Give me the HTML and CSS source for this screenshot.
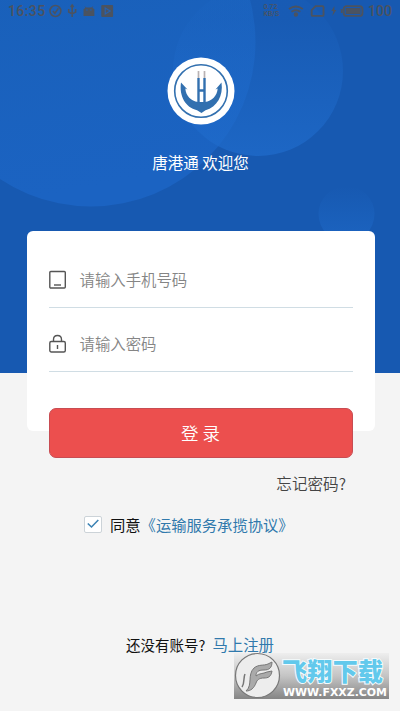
FILE: index.html
```html
<!DOCTYPE html>
<html lang="zh-CN">
<head>
<meta charset="utf-8">
<title>唐港通</title>
<link rel="stylesheet" href="styles.css">
</head>
<body>
<main class="screen">
  <svg class="backdrop" width="400" height="373" viewBox="0 0 400 373" aria-hidden="true">
    <defs>
      <linearGradient id="g1" x1="0" y1="0" x2="0.2" y2="1"><stop offset="0.3" stop-color="#1960b9"/><stop offset="1" stop-color="#1b63c2"/></linearGradient>
      <linearGradient id="g2" x1="0" y1="0" x2="0" y2="1"><stop offset="0.2" stop-color="#1f6bcb" stop-opacity="0.12"/><stop offset="1" stop-color="#1f6bcb" stop-opacity="0.75"/></linearGradient>
      <linearGradient id="g3" x1="0" y1="0" x2="0" y2="1"><stop offset="0" stop-color="#1f6bcb" stop-opacity="0"/><stop offset="1" stop-color="#1f6bcb" stop-opacity="0.6"/></linearGradient>
    </defs>
    <circle cx="91" cy="42" r="164.500" fill="url(#g1)"/>
    <circle cx="258" cy="71" r="85" fill="url(#g2)"/>
    <circle cx="346.500" cy="214" r="28" fill="url(#g3)"/>
  </svg>
  <header class="status">
    <span class="clock">16:35</span>
    <svg class="status-left" width="70" height="16" viewBox="0 0 70 16" fill="none" stroke="#4b5360" stroke-width="1.600">
      <circle cx="7.500" cy="8" r="5.500"/><path d="M5 8l2 2.300 3.500-5"/>
      <path d="M24.500 2v12M21 6v3l3.500 2 3.500-2V6M23 4L24.500 2l1.500 2"/>
      <path d="M36 13V6l2-1-1-2 2 1.500h5L46 3l-1 2 2 1v7z" fill="#4b5360" stroke="none"/>
      <path d="M39 7h1M43 7h1" stroke="#1961bb"/>
      <rect x="54" y="2" width="12" height="12" rx="1" fill="#4b5360" stroke="none"/>
      <path d="M58 5l5 3-5 3z" stroke="#2861ae" stroke-width="1.200"/>
    </svg>
    <span class="speed">0.72<br>KB/S</span>
    <svg class="status-right" width="82" height="16" viewBox="0 0 82 16" fill="none" stroke="#4b5360" stroke-width="1.900">
      <path d="M1 6q7-5 14 0M3.500 8.800q4.500-3.200 9 0"/><circle cx="8" cy="11.500" r="1.300" fill="#4b5360"/>
      <path d="M28 3h7q1 0 1 1v8q0 1-1 1H25q-1 0-1-1V7z"/>
      <path d="M47 3l-3 5h2l-1 5 4-6h-2z" fill="#4b5360" stroke="none"/>
      <rect x="56.500" y="3" width="19" height="10" rx="3"/><rect x="58.500" y="5" width="15" height="6" fill="#4b5360" stroke="none"/><path d="M54.500 6v4"/>
    </svg>
    <span class="level">100</span>
  </header>
  <section class="brand">
    <svg class="logo" width="68" height="68" viewBox="0 0 68 68">
      <circle cx="34" cy="34" r="33.500" fill="#fff"/>
      <circle cx="34" cy="34" r="26.300" fill="none" stroke="#3270af" stroke-width="1.600"/>
      <path d="M14 25.500L20.500 32.500l-2.200-1C19 39 24 44 31 45h7C45 44 50 39 50.700 31.500l-2.200 1L54.500 25.500C56.500 39 50 50 38.500 53.200L34.500 56 30 53.200C18.500 50.500 12 39 14 25.500z" fill="#3270af"/>
      <path d="M31.500 21v26M37.500 21v26M32 33.500h6" fill="none" stroke="#3270af" stroke-width="2.400"/>
      <path d="M31.500 14v7M37.500 14v7" stroke="#b9b2b3" stroke-width="1.700"/>
    </svg>
    <h1 class="welcome">唐港通 欢迎您</h1>
  </section>
  <form class="card">
    <label class="field">
      <svg width="18" height="20" viewBox="0 0 18 20" fill="none" stroke="#555" stroke-width="1.400"><rect x="0.800" y="2.500" width="15.500" height="16.500" rx="1"/><path d="M5 16h7"/></svg>
      <span>请输入手机号码</span>
    </label>
    <label class="field">
      <svg width="18" height="20" viewBox="0 0 18 20" fill="none" stroke="#555" stroke-width="1.400"><rect x="0.800" y="8.500" width="15.500" height="10.500" rx="1.500"/><path d="M4.500 8.500V6.500q0-4 4-4t4 4v2M8.500 12v4"/></svg>
      <span>请输入密码</span>
    </label>
  </form>
  <button class="login" type="button">登 录</button>
  <a class="forgot">忘记密码?</a>
  <div class="agree">
    <span class="check"><svg width="12" height="10" viewBox="0 0 12 10" fill="none" stroke="#3c83b4" stroke-width="1.600"><path d="M.8 4.500l3.700 3.500L11.300 1"/></svg></span>
    <span>同意<a class="link">《运输服务承揽协议》</a></span>
  </div>
  <div class="signup"><span>还没有账号?</span><a class="link">马上注册</a></div>
  <svg class="watermark" width="155" height="46" viewBox="0 0 155 46">
    <defs><linearGradient id="w" x1="0" y1="0" x2="0" y2="1"><stop offset="0" stop-color="#eee"/><stop offset="0.500" stop-color="#c4c4c4"/><stop offset="1" stop-color="#858585"/></linearGradient></defs>
    <rect width="155" height="46" fill="url(#w)"/>
    <circle cx="23.500" cy="22.500" r="22" fill="#ededed" stroke="#777" stroke-width="1.200"/>
    <path d="M12 38C19 32 13 22 20 15c5-4 9-2 14-4l4-2c0 6-3 8-8 8-6 0-8 2-8 6 3-3 7-2 11-4l5-1c-1 6-4 7-8 7-5 0-7 2-8 5-2 5-5 8-10 8z" fill="#aaa" stroke="#777" stroke-width="1"/>
    <path d="M8 34c3-4 1-9 3-13" fill="none" stroke="#777" stroke-width="1.500"/>
    <text class="mark-name" x="48" y="27.500" textLength="101">飞翔下载</text>
    <text class="mark-url" x="49" y="42.500" textLength="104" lengthAdjust="spacingAndGlyphs">WWW.FXXZ.COM</text>
  </svg>
</main>
</body>
</html>
```

FILE: styles.css
```css
* { box-sizing: border-box; }
body {
  margin: 0;
  background: #f4f4f4;
  font-family: "Noto Sans CJK SC", sans-serif;
  font-size: 15.4px;
  color: #111;
}
.screen {
  position: relative;
  width: 400px;
  height: 711px;
  overflow: hidden;
  display: flex;
  flex-direction: column;
  background: linear-gradient(#1759b1 373px, #f4f4f4 373px);
}
.screen > * { position: relative; flex-shrink: 0; }
.screen > .backdrop { position: absolute; top: 0; left: 0; }
.status {
  display: flex;
  align-items: center;
  height: 22px;
  padding: 0 8px;
  font-family: Roboto, sans-serif;
  font-size: 14px;
  font-weight: 500;
  color: #4b5360;
}
.clock { width: 41px; letter-spacing: .4px; }
.speed {
  width: 18px;
  margin-left: 146px;
  font-size: 7px;
  line-height: 7px;
}
.status-right { margin-left: 7px; }
.level { margin-left: -1px; }
.brand {
  display: flex;
  flex-direction: column;
  align-items: center;
  padding-top: 35px;
  height: 209px;
}
.logo { margin-left: 1px; }
.welcome {
  margin: 25px 0 0 1px;
  font-size: 15.5px;
  font-weight: 400;
  line-height: 24px;
  color: #fff;
}
.card {
  width: 348px;
  height: 200px;
  margin-left: 26.500px;
  padding: 12px 22px;
  border-radius: 6px;
  background: #fff;
}
.field {
  display: flex;
  align-items: center;
  gap: 13px;
  height: 64.500px;
  padding: 8px 0 0;
  border-bottom: 1px solid #d0dde4;
  color: #858585;
  font-weight: 350;
}
.login {
  width: 304px;
  height: 50px;
  margin: -23px 0 0 48.500px;
  padding: 0 0 2px;
  border: 1px solid #c84c52;
  border-radius: 7px;
  background: #ec4f4e;
  color: #fff;
  font: 350 17.500px "Noto Sans CJK SC", sans-serif;
}
.forgot {
  align-self: flex-end;
  margin: 13px 54px 0 0;
  line-height: 24px;
  font-size: 15.600px;
  font-weight: 350;
  color: #444;
}
.agree {
  display: flex;
  align-items: center;
  gap: 8px;
  height: 24px;
  margin: 17px 0 0 84px;
  font-size: 15.300px;
}
.check {
  display: grid;
  place-items: center;
  width: 18px;
  height: 17px;
  border: 1px solid #ccd3d8;
  border-radius: 2px;
  background: #fff;
}
.link { color: #3079ac; }
.signup {
  display: flex;
  align-items: center;
  gap: 7px;
  height: 24px;
  margin: 96px 0 0 126px;
}
.signup span { font-size: 14.500px; }
.screen > .watermark { position: absolute; left: 234px; top: 653px; overflow: visible; }
.mark-name {
  font: 900 25px "Noto Sans CJK SC", sans-serif;
  fill: #62c9ec;
  stroke: #f4fbfd;
  stroke-width: 2px;
  paint-order: stroke;
}
.mark-url {
  font: 700 10px "DejaVu Sans", sans-serif;
  fill: #fff;
}
```
